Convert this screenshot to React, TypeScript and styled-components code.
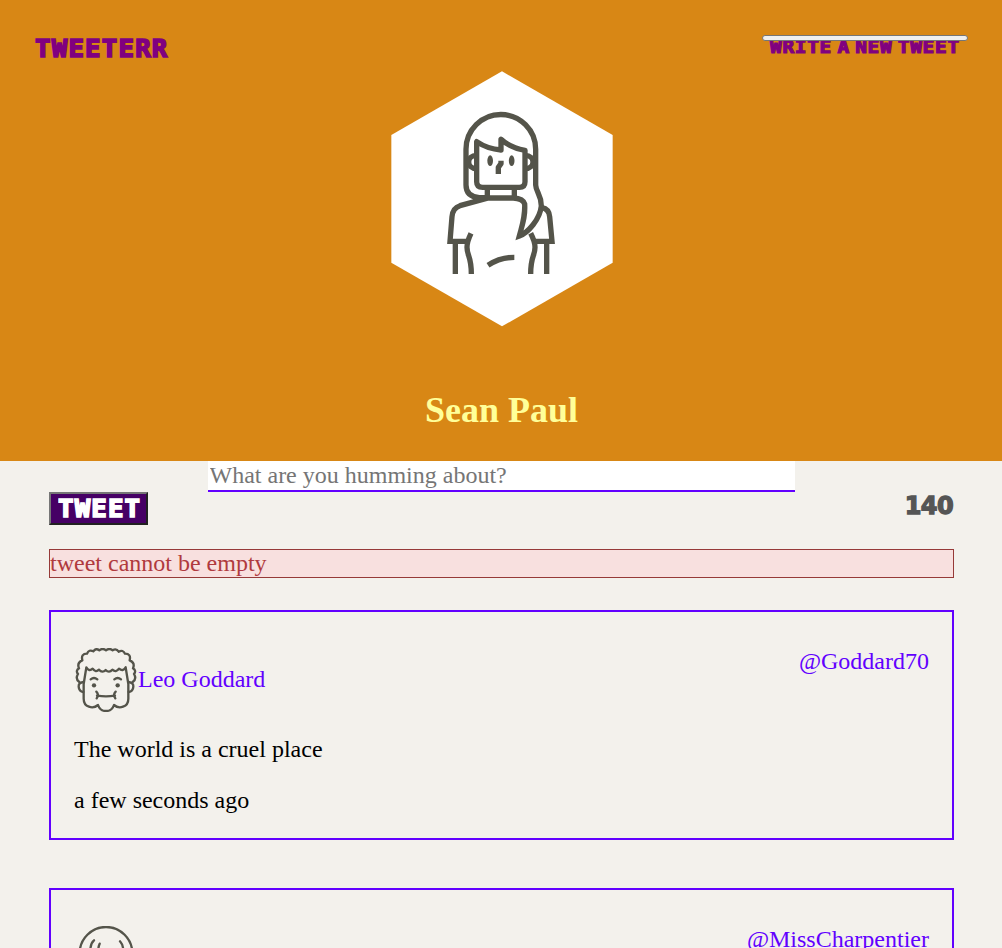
import React from "react";
import styled, { createGlobalStyle } from "styled-components";

const INK = "#54544a";
const VIOLET = "#6200ff";

const GlobalStyle = createGlobalStyle`
  html { height: 100%; overflow: hidden; }
  body {
    margin: 0;
    background: #f3f1ec;
    font-family: "Liberation Serif", "Times New Roman", serif;
    font-size: 24px;
    line-height: 27px;
    overflow: hidden;
    height: 100vh;
  }
  * { box-sizing: border-box; }
`;

const Header = styled.header`
  height: 461px;
  background: #d88715;
  display: flex;
  flex-direction: column;
  align-items: center;
`;

const Nav = styled.nav`
  align-self: stretch;
  height: 71px;
  flex: none;
  display: flex;
  justify-content: space-between;
  padding: 35px 34px 0 35px;
`;

const Display = styled.span<{ $size: number; $stretch: number; $stroke: number; $gap: number }>`
  display: block;
  white-space: nowrap;
  font-family: "DejaVu Sans Mono", monospace;
  font-weight: 700;
  font-size: ${(p) => p.$size}px;
  letter-spacing: ${(p) => p.$gap}px;
  transform: scaleX(${(p) => p.$stretch});
  transform-origin: left center;
  -webkit-text-stroke: ${(p) => p.$stroke}px currentColor;
`;

const Logo = styled.a`
  color: purple;
  line-height: 28px;
  width: 134px;
`;

const Compose = styled.div`
  width: 206px;
  display: flex;
  flex-direction: column;
`;

const ComposeButton = styled.button`
  height: 6px;
  width: 206px;
  padding: 0;
  flex: none;
  position: relative;
  z-index: 1;
  background: #efefef;
  border: 1px solid #767676;
  border-radius: 3px;
`;

const ComposeLabel = styled.a`
  color: purple;
  line-height: 20px;
  margin: -4px 0 0 8px;
  word-spacing: -6.5px;
`;

const Portrait = styled.svg`
  display: block;
  flex: none;
  width: 222px;
  height: 256px;
  margin-left: 2px;
`;

const Name = styled.h1`
  margin: 63px 0 0 1px;
  font-size: 36px;
  line-height: 41px;
  color: #ffff99;
`;

const Main = styled.main`
  padding: 0 48px 0 49px;
`;

const Form = styled.form`
  display: flex;
  flex-direction: column;
`;

const TweetInput = styled.input`
  align-self: center;
  width: 587px;
  height: 31px;
  margin-right: 1px;
  padding: 1px 2px;
  border: 0;
  border-bottom: 2px solid ${VIOLET};
  background: #fff;
  font: inherit;
  &::placeholder { color: #757575; }
`;

const FormRow = styled.div`
  display: flex;
  justify-content: space-between;
  height: 57px;
`;

const TweetButton = styled.button`
  width: 99px;
  height: 33px;
  padding: 0 0 0 7px;
  text-align: left;
  color: #fff;
  background: #460065;
  border: 2px solid;
  border-color: #767676 #212121 #212121 #767676;
`;

const Counter = styled.span`
  font-family: "DejaVu Sans", sans-serif;
  font-weight: 700;
  font-size: 24px;
  line-height: 29px;
  letter-spacing: -0.6px;
  margin-right: 1px;
  color: #555;
  -webkit-text-stroke: 1.3px currentColor;
`;

const Alert = styled.div`
  height: 29px;
  border: 1px solid #963a38;
  background: #f8e0df;
  color: #b03a3e;
`;

const Card = styled.article`
  height: 230px;
  margin: 32px 0 48px;
  padding: 36px 23px 0;
  border: 2px solid ${VIOLET};
`;

const CardHead = styled.div`
  display: flex;
  justify-content: space-between;
  color: ${VIOLET};
`;

const Author = styled.div`
  display: flex;
  align-items: center;
  height: 64px;
`;

const AuthorName = styled.span`
  padding-bottom: 2px;
`;

const Avatar = styled.svg`
  display: block;
  width: 64px;
  height: 64px;
`;

const Text = styled.p`
  margin: 24px 0 0;
`;

function HexPortrait() {
  return (
    <Portrait viewBox="33 33 666 768" fill="none">
      <path fill="#fff" d="M366 34 698 225V608L366 799 34 608V225Z" />
      <g stroke={INK} strokeWidth="16" strokeLinejoin="round">
        <path d="M325 413H298Q258 410 258 375V268A104.5 104.5 0 0 1 467 268V375C468 397 484 403 484 438C480 478 444 518 418 528C428 490 436 470 434 432C430 418 415 415 400 414H325L240 437Q218 444 216 470L210 544H268" strokeLinejoin="miter" />
        <path d="M290 245V365Q290 382 308 382H418Q435 382 435 365V271C408 267 385 258 363 238V270C335 268 312 260 290 245Z" />
        <path d="M322 382V414M403 382V414" />
        <path d="M290 286C258 286 258 326 290 326M435 286C467 286 467 326 435 326" />
        <path d="M363 302V311L355 322V342" />
        <path d="M486 443Q507 447 509 470L516 544H457" strokeLinejoin="miter" />
        <path d="M226 544V642M500 544V642" />
        <path d="M273 520Q261 545 261 562C261 588 274 588 274 642M452 520Q465 545 465 562C465 588 452 588 452 642" />
        <path d="M324 616Q360 592 403 592" />
      </g>
      <g fill={INK}>
        <ellipse cx="330.500" cy="302" rx="8.500" ry="16" />
        <ellipse cx="395" cy="302" rx="8.500" ry="16" />
      </g>
    </Portrait>
  );
}

function CurlyFace() {
  return (
    <Avatar viewBox="102 144 192 192" fill="none">
      <g stroke={INK} strokeWidth="7" strokeLinejoin="round" strokeLinecap="round">
        <path d="M118 246Q105 237 114 222Q106 212 117 205Q110 188 127 181Q122 161 141 161Q147 147 160 154Q168 143 178 151Q188 143 198 151Q208 143 218 151Q229 144 236 155Q249 148 255 161Q274 161 269 181Q286 188 279 205Q290 212 282 222Q291 237 278 246" />
        <path d="M131 252L139 202Q147 216 158 206Q167 219 177 209Q187 220 197 210Q207 220 217 209Q228 219 237 206Q249 216 257 202L265 252V296C265 322 237 328 222 315C214 339 182 339 174 315C159 328 131 322 131 296Z" />
        <path d="M130 246Q115 248 116 260Q117 275 130 276M266 246Q281 248 280 260Q279 275 266 276" />
        <path d="M152 238Q162 230 172 238M223 238Q233 230 243 238M171 287Q198 291 225 287M169 275Q178 284 170 295M227 275Q218 284 226 295" />
      </g>
      <circle cx="162" cy="256" r="6.500" fill={INK} />
      <circle cx="233" cy="256" r="6.500" fill={INK} />
    </Avatar>
  );
}

function RoundFace() {
  return (
    <Avatar viewBox="102 138 192 192" fill="none">
      <g stroke={INK} strokeWidth="7" strokeLinecap="round">
        <circle cx="198" cy="220" r="79" />
        <path d="M162 181Q151 190 151 212M179 191Q174 202 175 218M240 184Q250 195 250 214" />
      </g>
    </Avatar>
  );
}

export default function App() {
  return (
    <>
      <GlobalStyle />
      <Header>
        <Nav>
          <Logo>
            <Display $size={24} $stretch={1.07} $stroke={1.6} $gap={1.15}>TWEETERR</Display>
          </Logo>
          <Compose>
            <ComposeButton aria-label="Compose" />
            <ComposeLabel>
              <Display $size={18} $stretch={1.08} $stroke={1.2} $gap={0.65}>WRITE A NEW TWEET</Display>
            </ComposeLabel>
          </Compose>
        </Nav>
        <HexPortrait />
        <Name>Sean Paul</Name>
      </Header>
      <Main>
        <Form>
          <TweetInput placeholder="What are you humming about?" />
          <FormRow>
            <TweetButton type="button">
              <Display $size={24} $stretch={1.07} $stroke={1.6} $gap={1.1}>TWEET</Display>
            </TweetButton>
            <Counter>140</Counter>
          </FormRow>
        </Form>
        <Alert>tweet cannot be empty</Alert>
        <Card>
          <CardHead>
            <Author>
              <CurlyFace />
              <AuthorName>Leo Goddard</AuthorName>
            </Author>
            <span>@Goddard70</span>
          </CardHead>
          <Text>The world is a cruel place</Text>
          <Text>a few seconds ago</Text>
        </Card>
        <Card>
          <CardHead>
            <Author>
              <RoundFace />
            </Author>
            <span>@MissCharpentier</span>
          </CardHead>
        </Card>
      </Main>
    </>
  );
}
